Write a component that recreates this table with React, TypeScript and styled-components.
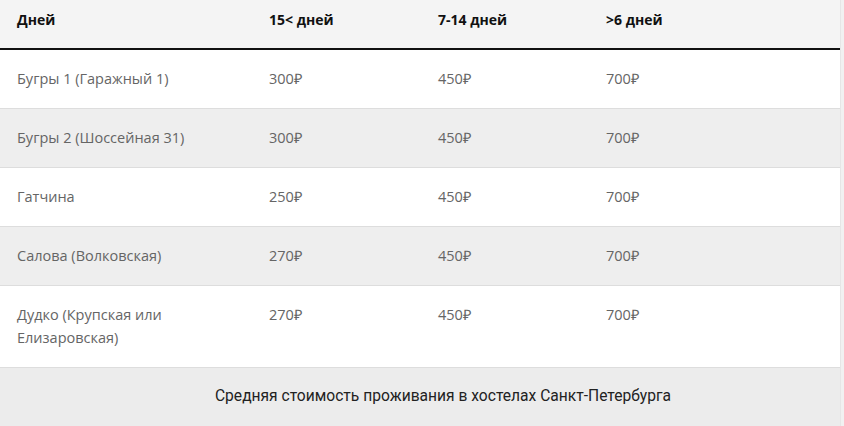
import React from "react";
import styled, { createGlobalStyle } from "styled-components";

const Global = createGlobalStyle`
  html, body { margin: 0; padding: 0; background: #f1f1f1; }
  body { font-family: "Open Sans", "Liberation Sans", sans-serif; }
`;

const Wrap = styled.div`
  width: 840px;
  background: #ffffff;
  border-right: 1px solid #e6e6e6;
`;

const Table = styled.table`
  width: 100%;
  border-collapse: collapse;
  table-layout: fixed;
`;

const HeadRow = styled.tr`
  background: #f4f4f4;
  border-bottom: 2px solid #111;
`;

const Th = styled.th<{ $w?: number }>`
  width: ${(p) => (p.$w ? `${p.$w}px` : "auto")};
  text-align: left;
  font-family: "Open Sans", "Liberation Sans", sans-serif;
  font-weight: 700;
  font-size: 14px;
  line-height: 23px;
  color: #111;
  padding: 8px 17px 17px 17px;
`;

const Row = styled.tr<{ $alt: boolean }>`
  background: ${(p) => (p.$alt ? "#eeeeee" : "#ffffff")};
  border-bottom: 1px solid #dddddd;
`;

const Td = styled.td`
  vertical-align: top;
  font-family: "Open Sans", "Liberation Sans", sans-serif;
  font-weight: 400;
  font-size: 14.5px;
  line-height: 23px;
  color: #656565;
  padding: 17px 17px 18px 17px;
`;

const Caption = styled.div`
  background: #ececec;
  height: 60px;
  padding: 17px 0 0 46px;
  box-sizing: border-box;
  text-align: center;
  font-family: Roboto, "Liberation Sans", sans-serif;
  font-size: 15.6px;
  line-height: 22px;
  color: #222;
`;

const rows = [
  ["Бугры 1 (Гаражный 1)", "300₽", "450₽", "700₽"],
  ["Бугры 2 (Шоссейная 31)", "300₽", "450₽", "700₽"],
  ["Гатчина", "250₽", "450₽", "700₽"],
  ["Салова (Волковская)", "270₽", "450₽", "700₽"],
  ["Дудко (Крупская или Елизаровская)", "270₽", "450₽", "700₽"],
];

export default function App() {
  return (
    <>
      <Global />
      <Wrap>
        <Table>
          <thead>
            <HeadRow>
              <Th $w={218}>Дней</Th>
              <Th $w={135}>15&lt; дней</Th>
              <Th $w={134}>7-14 дней</Th>
              <Th>&gt;6 дней</Th>
            </HeadRow>
          </thead>
          <tbody>
            {rows.map((r, i) => (
              <Row key={i} $alt={i % 2 === 1}>
                {r.map((c, j) => (
                  <Td key={j}>{c}</Td>
                ))}
              </Row>
            ))}
          </tbody>
        </Table>
        <Caption>Средняя стоимость проживания в хостелах Санкт-Петербурга</Caption>
      </Wrap>
    </>
  );
}
